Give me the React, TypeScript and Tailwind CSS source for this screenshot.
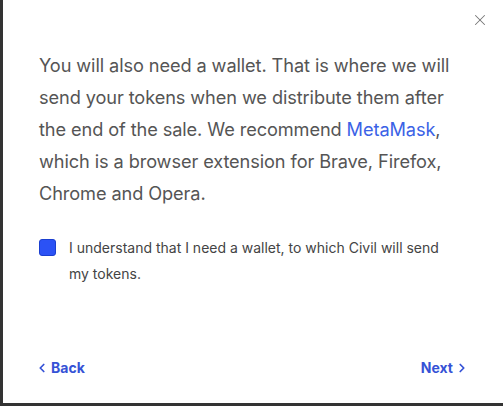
import { ChevronLeft, ChevronRight, X } from "lucide-react";

export default function App() {
  return (
    <div className="w-[503px] h-[406px] bg-[#333] pl-[3px] pb-[3px] overflow-hidden">
      <div className="relative h-full bg-white flex flex-col px-[36px] [font-family:Inter,'Liberation_Sans',sans-serif]">
        <button className="absolute right-[14px] top-[11px] text-[#777]">
          <X size={18} strokeWidth={1.4} />
        </button>
        <p className="mt-[49px] text-[18.2px] leading-[32px] text-[#555] tracking-[-0.1px]">
          You will also need a wallet. That is where we will send your tokens when we
          distribute them after the end of the sale. We recommend{" "}
          <a className="text-[#3b62e6]">MetaMask</a>, which is a browser extension for
          Brave, Firefox, Chrome and Opera.
        </p>
        <label className="mt-[26px] flex items-start gap-[13px] pr-[20px]">
          <span className="mt-[4px] w-[17px] h-[17px] shrink-0 rounded-[3px] bg-[#2b52f5] border border-[#1b3fd0]" />
          <span className="text-[14px] leading-[26px] text-[#444]">
            I understand that I need a wallet, to which Civil will send my tokens.
          </span>
        </label>
        <div className="mt-auto mb-[25px] flex items-center justify-between text-[14px] font-bold text-[#3552d6]">
          <button className="flex items-center gap-[2px] -ml-[4px]">
            <ChevronLeft size={14} strokeWidth={3} />
            Back
          </button>
          <button className="flex items-center gap-[2px] -mr-[2px]">
            Next
            <ChevronRight size={14} strokeWidth={3} />
          </button>
        </div>
      </div>
    </div>
  );
}
